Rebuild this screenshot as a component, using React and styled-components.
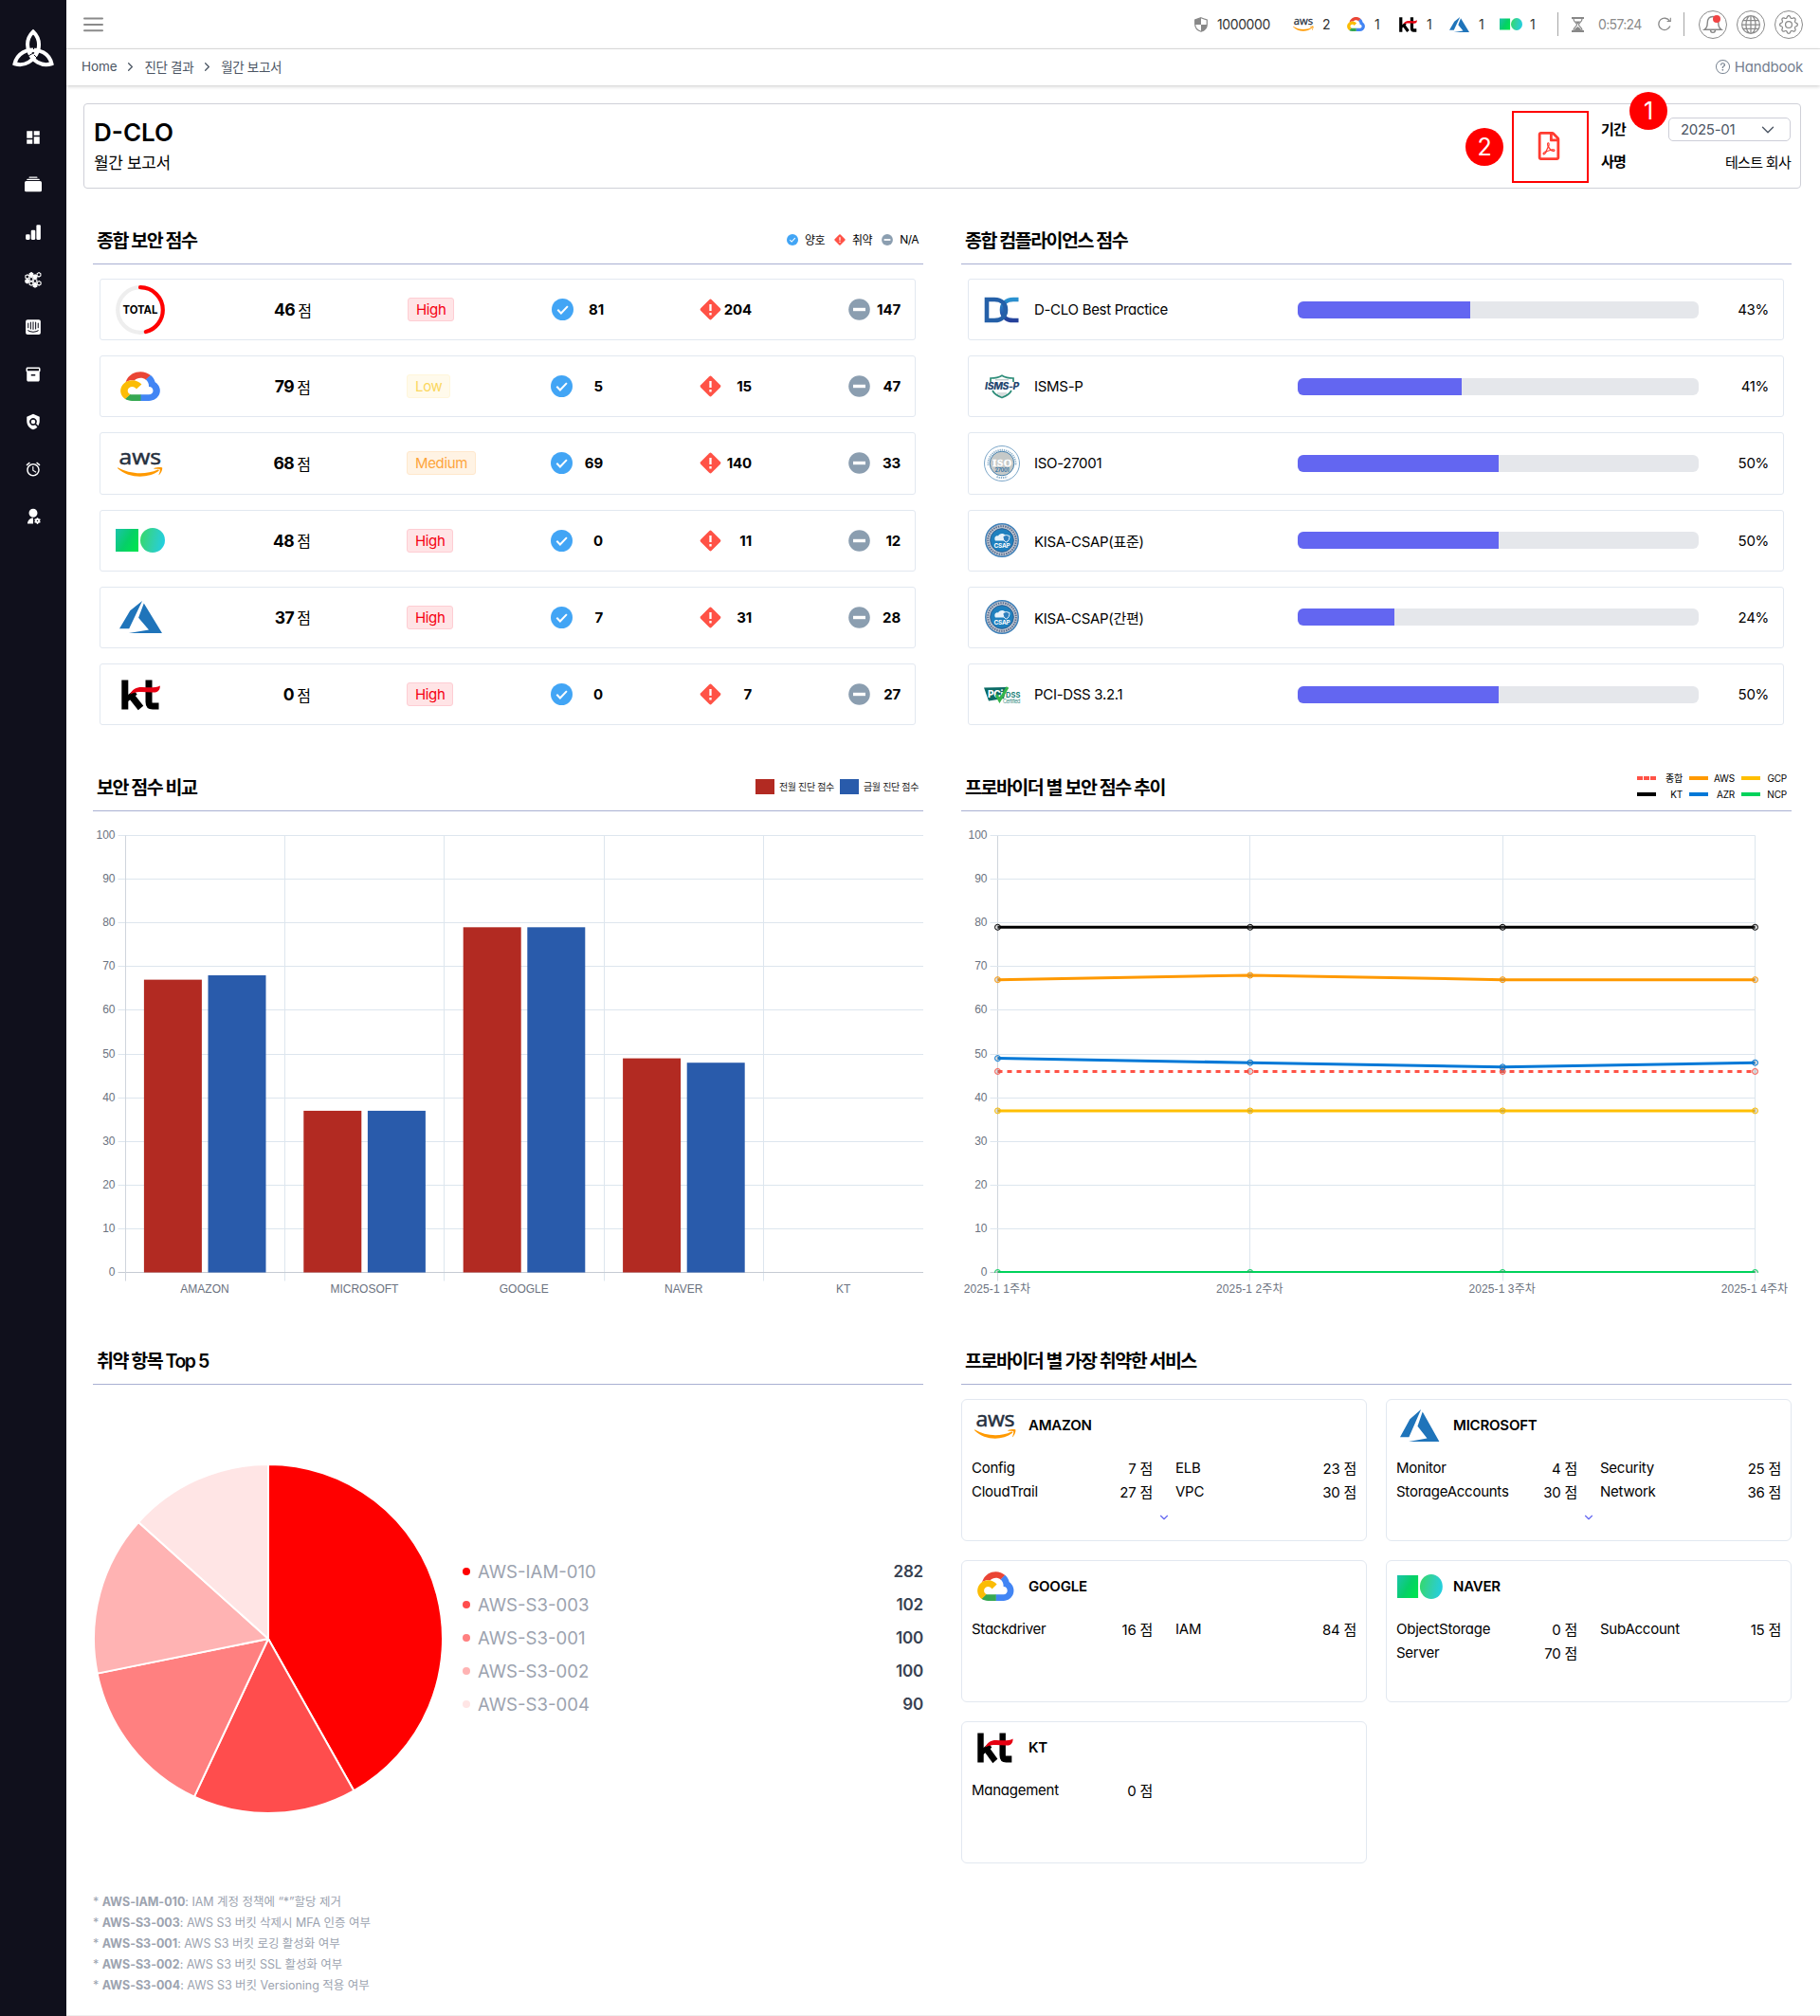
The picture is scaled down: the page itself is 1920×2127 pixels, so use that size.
import React from 'react';
import styled, { createGlobalStyle } from 'styled-components';
import { MdDashboard, MdInventory2, MdPolicy, MdAlarm } from 'react-icons/md';
import { BsCollectionFill, BsBarChartFill, BsGlobe, BsGear, BsQuestionCircle } from 'react-icons/bs';
import { FaIntercom, FaRegFilePdf } from 'react-icons/fa';
import { RiUserSettingsFill } from 'react-icons/ri';
import { ChevronDown, ChevronRight } from 'lucide-react';

const Global = createGlobalStyle`
  * { box-sizing: border-box; }
  body {
    margin: 0;
    background: #fff;
    color: #000;
    font-family: Inter, 'Noto Sans CJK KR', sans-serif;
    font-feature-settings: 'cv11';
    white-space: nowrap;
  }
  svg { display: block; flex: none; overflow: visible; }
`;

const Page = styled.div`
  display: flex;
  height: 2127px;
  overflow: hidden;
`;
const Sidebar = styled.nav`
  width: 70px;
  flex: none;
  background: #10101c;
  color: #fff;
  display: flex;
  flex-direction: column;
  align-items: center;
  padding-top: 30px;
`;
const Brand = styled.div`
  height: 90px;
`;
const NavItem = styled.div`
  height: 50px;
  display: flex;
  align-items: center;
  justify-content: center;
`;
const Main = styled.div`
  flex: 1;
  display: flex;
  flex-direction: column;
  border-bottom: 1px solid #eee;
`;
const TopBar = styled.header`
  height: 52px;
  border-bottom: 1px solid #e4e4e4;
  display: flex;
  align-items: center;
  justify-content: space-between;
  padding: 0 18px;
  color: #8a8a8a;
`;
const TopGroup = styled.div`
  display: flex;
  align-items: center;
`;
const Account = styled.div`
  width: 104px;
  display: flex;
  align-items: center;
  gap: 10px;
  font-size: 14px;
  letter-spacing: -0.4px;
  color: #333;
`;
const ProviderCount = styled.div`
  width: ${(p) => p.$w}px;
  display: flex;
  align-items: center;
  gap: ${(p) => p.$gap || 10}px;
  font-size: 14px;
  color: #333;
`;
const Divider = styled.i`
  width: 1px;
  height: 25px;
  background: #a5a5a5;
  margin-right: ${(p) => p.$after}px;
`;
const Timer = styled.span`
  width: 63px;
  margin-left: 15px;
  font-size: 14px;
  letter-spacing: -0.65px;
`;
const RefreshSlot = styled.span`
  width: 27px;
`;
const RoundButton = styled.div`
  position: relative;
  width: 30px;
  height: 30px;
  border: 1px solid #8a8a8a;
  border-radius: 50%;
  display: flex;
  align-items: center;
  justify-content: center;
  margin-left: ${(p) => p.$gap || 0}px;
`;
const Dot = styled.i`
  position: absolute;
  left: 14px;
  top: 4px;
  width: 8px;
  height: 8px;
  border-radius: 50%;
  background: #f04444;
`;
const CrumbBar = styled.div`
  height: 38px;
  flex: none;
  display: flex;
  align-items: center;
  justify-content: space-between;
  padding: 0 18px 2px 16px;
  box-shadow: 0 1px 4px rgba(0, 0, 0, 0.22);
`;
const Crumbs = styled.div`
  display: flex;
  align-items: center;
  font-size: 13.5px;
  letter-spacing: -0.1px;
  color: #4b5563;
  svg { margin: 0 7px; }
`;
const Korean = styled.span`
  letter-spacing: -0.025em;
`;
const Handbook = styled.div`
  display: flex;
  align-items: center;
  gap: 5px;
  font-size: 15px;
  letter-spacing: -0.2px;
  color: #75808f;
`;
const Content = styled.main`
  padding: 19px 20px 0 18px;
`;
const ReportHead = styled.section`
  position: relative;
  height: 90px;
  border: 1px solid #cfd0d8;
  border-radius: 4px;
  display: flex;
  justify-content: space-between;
  padding: 7px 10px 0 10px;
`;
const ReportTitle = styled.h1`
  margin: 5px 0 0;
  font-size: 26px;
  line-height: 36px;
  font-weight: 600;
  letter-spacing: 0;
`;
const ReportSub = styled.div`
  font-size: 17px;
  line-height: 28px;
  letter-spacing: -0.35px;
`;
const HeadTools = styled.div`
  display: flex;
`;
const PdfBox = styled.div`
  width: 81px;
  height: 76px;
  border: 2px solid #f00;
  color: #ff3b30;
  display: flex;
  align-items: center;
  justify-content: center;
  padding: 0 4px 2px 0;
  margin-right: 13px;
`;
const Fields = styled.div`
  width: 200px;
  padding-top: 7px;
`;
const Field = styled.div`
  height: ${(p) => p.$h}px;
  display: flex;
  align-items: center;
  justify-content: space-between;
  font-size: 15px;
  letter-spacing: -0.7px;
`;
const FieldName = styled.b`
  font-weight: 600;
  margin-top: -2px;
`;
const Select = styled.div`
  width: 129px;
  height: 25px;
  border: 1px solid #cdced8;
  border-radius: 5px;
  display: flex;
  align-items: center;
  justify-content: space-between;
  padding: 0 12px 0 12px;
  font-size: 15px;
  letter-spacing: -0.3px;
  color: #4b5563;
`;
const Marker = styled.div`
  position: absolute;
  left: ${(p) => p.$x}px;
  top: ${(p) => p.$y}px;
  width: 40px;
  height: 40px;
  border-radius: 50%;
  background: #f00;
  color: #fff;
  font-size: 25px;
  display: flex;
  align-items: center;
  justify-content: center;
`;
const Board = styled.div`
  display: grid;
  grid-template-columns: 876px 876px;
  grid-template-rows: 577px 605px auto;
  column-gap: 40px;
  padding: 31px 0 0 10px;
`;
const Section = styled.section`
  min-width: 0;
`;
const SectionHead = styled.div`
  height: 49px;
  border-bottom: 1px solid #a9b0d2;
  display: flex;
  align-items: center;
  justify-content: space-between;
  padding: 0 5px 3px 4px;
`;
const SectionTitle = styled.h2`
  margin: 0;
  font-size: 19.5px;
  font-weight: 600;
  letter-spacing: -1.5px;
`;
const Legend = styled.div`
  display: flex;
  align-items: center;
  gap: 10px;
  font-size: 12px;
  letter-spacing: -0.5px;
`;
const LegendItem = styled.span`
  display: flex;
  align-items: center;
  gap: 7px;
`;
const BarLegend = styled.div`
  display: flex;
  gap: 6px;
  font-size: 10px;
  letter-spacing: -0.35px;
  color: #222;
`;
const BarKey = styled.span`
  display: flex;
  align-items: center;
  gap: 5px;
  &::before {
    content: '';
    width: 20px;
    height: 16px;
    background: ${(p) => p.$color};
  }
`;
const LineLegend = styled.div`
  display: grid;
  grid-template-columns: repeat(3, 48px);
  column-gap: 7px;
  row-gap: 1px;
  font-size: 10px;
  line-height: 16px;
  letter-spacing: -0.2px;
`;
const LineKey = styled.span`
  display: flex;
  align-items: center;
  justify-content: space-between;
`;
const RowList = styled.div`
  padding: 15px 8px 0 7px;
  display: flex;
  flex-direction: column;
  gap: 16px;
`;
const rowBox = `
  height: 65.2px;
  border: 1px solid #e2e8f0;
  border-radius: 3px;
  align-items: center;
`;
const ScoreRow = styled.div`
  ${rowBox}
  display: grid;
  grid-template-columns: ${(p) => (p.$total ? '83px 139px 254px 156px' : '82px 139px 254px 157px')} 157px 55px;
`;
const LogoCell = styled.div`
  display: flex;
  justify-content: center;
  padding-left: ${(p) => p.$nudge || 0}px;
`;
const Score = styled.div`
  display: flex;
  justify-content: flex-end;
  align-items: center;
  gap: 3px;
  font-size: 16px;
  letter-spacing: -0.9px;
  b { font-size: 17.5px; font-weight: 700; letter-spacing: -0.5px; }
`;
const tones = {
  High: ['#f50010', '#ffe4e6', '#fecdd3'],
  Medium: ['#fda53c', '#fff3e4', '#ffe8cc'],
  Low: ['#fbd75e', '#fffaeb', '#fff6da'],
};
const Badge = styled.span`
  display: inline-block;
  margin-left: 102px;
  padding: 0 8px;
  height: 25px;
  line-height: 23px;
  border-radius: 3px;
  font-size: 15px;
  letter-spacing: -0.35px;
  color: ${(p) => tones[p.$level][0]};
  background: ${(p) => tones[p.$level][1]};
  border: 1px solid ${(p) => tones[p.$level][2]};
`;
const Metric = styled.div`
  width: 55px;
  display: flex;
  align-items: center;
  justify-content: space-between;
  font-size: 15px;
  font-weight: 700;
  letter-spacing: -0.15px;
`;
const ComplianceRow = styled.div`
  ${rowBox}
  display: grid;
  grid-template-columns: 69px 278px 423px 74px;
  font-size: 15px;
  letter-spacing: -0.3px;
`;
const Track = styled.div`
  height: 18px;
  border-radius: 6px;
  background: #e5e7eb;
  overflow: hidden;
`;
const Fill = styled.div`
  height: 100%;
  background: #6366f1;
`;
const Percent = styled.div`
  text-align: right;
`;
const PieArea = styled.div`
  display: flex;
  align-items: center;
  height: 536px;
  padding-left: 1px;
`;
const PieLegend = styled.div`
  flex: 1;
  margin-left: 21px;
  padding-bottom: 2px;
`;
const PieKey = styled.div`
  height: 35px;
  display: flex;
  align-items: center;
  font-size: 18.6px;
  letter-spacing: 0;
  color: #9ca3af;
  &::before {
    content: '';
    width: 8px;
    height: 8px;
    margin-right: 8px;
    border-radius: 50%;
    background: ${(p) => p.$color};
  }
  b { margin-left: auto; font-size: 17px; font-weight: 600; letter-spacing: -0.2px; color: #374151; }
`;
const Notes = styled.div`
  margin-top: -1px;
  font-size: 12.5px;
  line-height: 22px;
  letter-spacing: -0.03px;
  color: #9ca3af;
`;
const Cards = styled.div`
  display: grid;
  grid-template-columns: 428px 428px;
  gap: 20px;
  padding-top: 15px;
`;
const Card = styled.div`
  height: 150px;
  border: 1px solid #e2e8f0;
  border-radius: 6px;
  padding: 2px 10px 0;
`;
const CardHead = styled.div`
  display: flex;
  align-items: center;
  height: 48px;
  font-size: 15px;
  font-weight: 600;
  letter-spacing: -0.2px;
`;
const CardLogo = styled.div`
  width: 52px;
  margin-right: 9px;
  margin-left: -1px;
  padding-top: 1px;
  display: flex;
  justify-content: center;
`;
const Services = styled.div`
  display: grid;
  grid-template-columns: 191px 191px;
  column-gap: 24px;
  margin-top: 9px;
`;
const Service = styled.div`
  height: 25px;
  display: flex;
  align-items: center;
  justify-content: space-between;
  font-size: 15px;
  letter-spacing: -0.25px;
`;
const More = styled.div`
  display: flex;
  justify-content: center;
  color: #6366f1;
  margin-top: 8px;
`;

/* ---------- logos ---------- */
const Aws = ({ w, h }) => (
  <svg width={w} height={h} viewBox="0 0 48 28" preserveAspectRatio="none">
    <text x="1.5" y="14.5" fontFamily="'Open Sans', sans-serif" fontWeight="500" fontSize="21" textLength="44.5" lengthAdjust="spacingAndGlyphs" fill="#252f3e" stroke="#252f3e" strokeWidth=".5">aws</text>
    <path d="M.2 18.300C12 25 29 26.500 42.500 20.600C43.800 20.200 44.300 21.300 43.300 22C32 30 12 30 .2 19.200C-.3 18.600 0 18.100 .2 18.300Z" fill="#f90" />
    <path d="M38.500 18.900C41.500 17.700 46 17.700 47 18.300C47.800 19.600 46.300 24 44 26C43.600 26.300 43.300 26.100 43.500 25.700C44.300 23.900 45.300 21.200 44.700 20.300C44 19.500 41 19.700 38.900 19.700C38.300 19.700 38.200 19.100 38.500 18.900Z" fill="#f90" />
  </svg>
);
const Gcp = ({ w, h }) => (
  <svg width={w} height={h} viewBox="5 14 118 94" preserveAspectRatio="none">
    <path fill="#ea4535" d="M80.6 40.3h.4l-.2-.2 14-14v-.3c-11.8-10.4-28.1-14-43.200-9.500C36.500 20.800 24.900 32.800 20.700 48c.2-.1.5-.2.8-.2 5.200-3.400 11.400-5.400 17.900-5.400 2.200 0 4.300.2 6.400.6.1-.1.2-.1.3-.1 9-9.900 24.200-11.100 34.600-2.600h-.1z" />
    <path fill="#4285f4" d="M108.100 47.800c-2.300-8.500-7.100-16.200-13.800-22.100L80 39.900c6 4.900 9.500 12.300 9.300 20v2.500c16.900 0 16.900 25.200 0 25.200H63.900v20h-.1l.1.2h25.400c14.600.1 27.500-9.300 31.800-23.100 4.300-13.800-1-28.800-13-36.900z" />
    <path fill="#36a852" d="M39 107.900h26.300V87.700H39c-1.900 0-3.700-.4-5.400-1.100l-15.200 14.600v.2c6 4.300 13.200 6.600 20.700 6.600z" />
    <path fill="#fbbc05" d="M40.200 41.900c-14.900.1-28.100 9.300-32.900 22.800-4.800 13.600 0 28.500 11.800 37.300l15.600-14.900c-8.600-3.700-10.600-14.500-4-20.800 6.600-6.400 17.800-4.400 21.700 3.800L68 55.200C61.400 46.900 51.100 42 40.200 42.100z" />
  </svg>
);
const Azure = ({ w, h }) => (
  <svg width={w} height={h} viewBox="0 4 26 20.8" preserveAspectRatio="none">
    <path fill="#1f74ba" d="M13.900 4L6.500 10.200 0 21.900h5.900zM14.900 5.600l-3.300 9.200 6.300 7.900-12.200 2.100H26z" />
  </svg>
);
const Naver = ({ w, h, id }) => (
  <svg width={w} height={h} viewBox="0 0 52 26" preserveAspectRatio="none">
    <defs>
      <linearGradient id={`${id}a`} x1="0" y1="0" x2="1" y2=".6">
        <stop offset="0" stopColor="#1cc3ac" />
        <stop offset=".6" stopColor="#06cf68" />
        <stop offset="1" stopColor="#00e152" />
      </linearGradient>
      <linearGradient id={`${id}b`} x1="0" y1=".3" x2="1" y2=".5">
        <stop offset="0" stopColor="#35d86c" />
        <stop offset=".6" stopColor="#2fd0b4" />
        <stop offset="1" stopColor="#22cfe0" />
      </linearGradient>
    </defs>
    <rect x="0" y="1" width="24" height="24" fill={`url(#${id}a)`} />
    <circle cx="39" cy="13" r="13" fill={`url(#${id}b)`} />
  </svg>
);
const Kt = ({ w, h }) => (
  <svg width={w} height={h} viewBox="0 0 41 32" preserveAspectRatio="none">
    <g fill="none" stroke="#000" strokeWidth="7">
      <path d="M3.800 .5V31.500" />
      <path d="M5 21L15 13.500" strokeWidth="5.500" />
      <path d="M9.500 16L20.500 30" />
      <path d="M29 .5V23.500Q29 28 33 28H39.500" />
    </g>
    <path d="M9 15.500C12 10 16 7.800 22 8C29 8.400 36 9 40.800 6.500C41 10 39.500 13.500 34 13.600C26 13.800 18 11.500 9 15.500Z" fill="#e60012" />
  </svg>
);
const logos = {
  AMAZON: [Aws, 48, 28],
  MICROSOFT: [Azure, 45, 34],
  GOOGLE: [Gcp, 42, 31],
  NAVER: [Naver, 52, 26],
  KT: [Kt, 41, 32],
};
const ProviderLogo = ({ name, scale = 1 }) => {
  const [Mark, w, h] = logos[name];
  return <Mark w={w * scale} h={h} id={`nv${scale * 100}`} />;
};
const Total = () => (
  <svg width="52" height="52" viewBox="0 0 52 52">
    <circle cx="26" cy="26" r="23.800" fill="none" stroke="#eee" strokeWidth="4.200" />
    <circle cx="26" cy="26" r="23.800" fill="none" stroke="#f00" strokeWidth="4.200" strokeLinecap="round" pathLength="100" strokeDasharray="46 100" transform="rotate(-90 26 26)" />
    <text x="26" y="29.500" textAnchor="middle" fontSize="11.500" fontWeight="700" textLength="37" lengthAdjust="spacingAndGlyphs" fontFamily="Inter">TOTAL</text>
  </svg>
);
const Triquetra = () => (
  <svg width="46" height="42" viewBox="-1 0 46 42" fill="none" stroke="#fff" strokeWidth="4">
    {[0, 120, 240].map((a) => (
      <path key={a} transform={`rotate(${a} 22 26)`} d="M22 3.500C14 11 14 23 22.500 31C30 23 30 11 22 3.500Z" />
    ))}
    <path d="M22.500 14V22M17 29L22 26M27 32L23 28" stroke="#10101c" strokeWidth="1" />
  </svg>
);
const HexCluster = () => (
  <svg width="18" height="17" viewBox="0 0 18 17" fill="none" stroke="#fff" strokeWidth="1.100">
    {[[2.800, 5, 0], [7, 2.800, 1], [11, 5, 1], [15, 2.800, 0], [2.800, 9.600, 1], [7, 7.500, 0], [11, 9.500, 0], [7, 12, 0], [11, 14, 1], [15.200, 11.800, 0]].map(([x, y, f], i) => (
      <path key={i} fill={f ? '#fff' : 'none'} d={`M${x} ${y - 2.200}l1.900 1.100v2.200l-1.900 1.100l-1.900-1.100v-2.200z`} />
    ))}
  </svg>
);
const CheckIcon = ({ s }) => (
  <svg width={s} height={s} viewBox="0 0 23 23">
    <circle cx="11.500" cy="11.500" r="11.500" fill="#42a5f5" />
    <path d="M6.300 11.800l3.600 3.700 7-7.400" fill="none" stroke="#fff" strokeWidth="2" />
  </svg>
);
const WarnIcon = ({ s }) => (
  <svg width={s} height={s} viewBox="0 0 23 23">
    <rect x="3.300" y="3.300" width="16.400" height="16.400" rx="1.800" transform="rotate(45 11.500 11.500)" fill="#ff5246" />
    <path d="M11.500 6v7M11.500 15v2.400" stroke="#fff" strokeWidth="2.300" />
  </svg>
);
const MinusIcon = ({ s }) => (
  <svg width={s} height={s} viewBox="0 0 23 23">
    <circle cx="11.500" cy="11.500" r="11.300" fill="#8b9eb0" />
    <rect x="5" y="9.800" width="13" height="3.400" fill="#fff" />
  </svg>
);
const ShieldIcon = () => (
  <svg width="14" height="16" viewBox="0 0 14 16">
    <path d="M7 .7L13.300 3V7.500C13.300 11 11 14 7 15.300C3 14 .7 11 .7 7.500V3Z" fill="#fff" stroke="#888" strokeWidth="1.200" />
    <path d="M7 .7V8H.7V3ZM7 8H13.300C13 11.500 11 14 7 15.300Z" fill="#888" />
  </svg>
);
const Hourglass = () => (
  <svg width="13" height="16" viewBox="0 0 13 16" fill="none" stroke="#888" strokeWidth="1.200">
    <path d="M0 1H13M0 15H13" strokeWidth="2" />
    <path d="M2 2C2 5.500 5.500 6 5.500 8C5.500 10 2 10.500 2 14M11 2C11 5.500 7.500 6 7.500 8C7.500 10 11 10.500 11 14" />
    <path d="M3.500 4.500H9.500L6.500 7.500ZM3 14C3 12 5 11.500 6.500 10C8 11.500 10 12 10 14Z" fill="#888" stroke="none" />
  </svg>
);
const Refresh = () => (
  <svg width="14" height="15" viewBox="0 0 14 15" fill="none" stroke="#888" strokeWidth="1.300">
    <path d="M12.800 9.500A6.200 6.200 0 1 1 12.300 4.200" />
    <path d="M13.300 .8V4.500H9.600" strokeWidth="1.100" />
  </svg>
);
const BellIcon = () => (
  <svg width="20" height="20" viewBox="0 0 20 20" fill="none" stroke="#888" strokeWidth="1.400">
    <path d="M1 15.300H19C16.500 13.500 15.800 12 15.800 8.500C15.800 4 13.500 1.500 10 1.500C6.500 1.500 4.200 4 4.200 8.500C4.200 12 3.500 13.500 1 15.300ZM7.500 15.500C7.500 19.300 12.500 19.300 12.500 15.500" />
  </svg>
);
const Burger = () => (
  <svg width="21" height="16" viewBox="0 0 21 16" stroke="#8a8a8a" strokeWidth="2" strokeLinecap="round">
    <path d="M1 1.500H20M1 8H20M1 14.300H20" />
  </svg>
);

/* ---------- compliance marks ---------- */
const DcMark = () => (
  <svg width="37" height="28" viewBox="0 0 37 28" fill="none" strokeWidth="4.600">
    <defs>
      <linearGradient id="dc1" x1="0" y1="0" x2="0" y2="1">
        <stop offset="0" stopColor="#2a92d0" />
        <stop offset="1" stopColor="#25409a" />
      </linearGradient>
    </defs>
    <path d="M36.500 3H31C23 3 19 8 19 14C19 20 23 25 31 25H36.500" stroke="url(#dc1)" />
    <path d="M3 3H11C19 3 23 8 23 14C23 20 19 25 11 25H3Z" stroke="#2560a8" />
  </svg>
);
const IsmsMark = () => (
  <svg width="38" height="26" viewBox="0 0 38 26">
    <path d="M7 8V4C12 4 16 3 19 1.200C22 3 26 4 31 4V8M9 17C11 21 15 23 19 24.500C23 23 27 21 29 17" fill="none" stroke="#2c8c78" strokeWidth="1.700" />
    <path d="M12 5.800H26M14 20H24M16 22H22" stroke="#9aa" strokeWidth=".8" />
    <text x="1" y="16" fontSize="10" fontStyle="italic" fontWeight="800" fontFamily="Inter" textLength="36" lengthAdjust="spacingAndGlyphs" fill="#25466e">ISMS-P</text>
  </svg>
);
const IsoMark = () => (
  <svg width="38" height="38" viewBox="0 0 38 38">
    <circle cx="19" cy="19" r="18.500" fill="#fff" stroke="#6d9cc2" strokeWidth=".9" />
    <path id="isoTop" d="M4.500 21A14.600 14.600 0 1 1 33.500 21" fill="none" stroke="#8db0ca" strokeWidth="1.800" strokeDasharray="1.300 .9" />
    <path d="M13.500 33A15 15 0 0 0 24.500 33" fill="none" stroke="#8db0ca" strokeWidth="2" strokeDasharray="1.300 .9" />
    <circle cx="19" cy="19" r="12.800" fill="#c5c9c8" stroke="#4b84b0" strokeWidth="1" />
    <text x="19" y="21.500" textAnchor="middle" fontSize="11" fontWeight="700" fontFamily="'Liberation Serif'" fill="#fff" stroke="#fff" strokeWidth=".4" textLength="20">ISO</text>
    <text x="19" y="28" textAnchor="middle" fontSize="5.500" fontWeight="700" fontFamily="Inter" fill="#3d78a6">27001</text>
  </svg>
);
const CsapMark = () => (
  <svg width="36" height="36" viewBox="0 0 36 36">
    <circle cx="18" cy="18" r="17.200" fill="#c3c8d0" stroke="#3d7fb8" strokeWidth="1.500" />
    <circle cx="18" cy="18" r="14.800" fill="none" stroke="#5b6f92" strokeWidth="2" strokeDasharray="1.500 1" />
    <circle cx="18" cy="18" r="12.300" fill="#1f80be" stroke="#2a5f95" />
    <path d="M11 18.500C9 15 12 12.500 14 13.500C15 10.500 20 10 21.500 13L20 18.500Z" fill="#e6f2fa" />
    <path d="M19 13.500L22.500 12.500L26 13.500C26 17 25 19 22.500 20C20 19 19 17 19 13.500Z" fill="#2f7fbd" stroke="#fff" strokeWidth=".9" />
    <text x="18" y="26" textAnchor="middle" fontSize="6.500" fontWeight="700" fontFamily="Inter" fill="#fff">CSAP</text>
  </svg>
);
const PciMark = () => (
  <svg width="38" height="18" viewBox="0 0 38 18">
    <path d="M0 1.500L24 1L21 13L5 15.500Z" fill="#0b6b66" />
    <text x="4" y="12" fontSize="10" fontWeight="800" fontFamily="Inter" fill="#fff" textLength="16" lengthAdjust="spacingAndGlyphs">PCi</text>
    <path d="M13 9L16.500 15L25 1" fill="none" stroke="#33b54a" strokeWidth="3" />
    <text x="23" y="12" fontSize="7.500" fontWeight="700" fontFamily="Inter" fill="#1d8078" textLength="15">DSS</text>
    <text x="20" y="17.500" fontSize="5.500" fontFamily="Inter" fill="#3d9088" textLength="18">Certified</text>
  </svg>
);

/* ---------- data ---------- */
const scores = [
  ['TOTAL', 46, 'High', 81, 204, 147],
  ['GOOGLE', 79, 'Low', 5, 15, 47],
  ['AMAZON', 68, 'Medium', 69, 140, 33],
  ['NAVER', 48, 'High', 0, 11, 12],
  ['MICROSOFT', 37, 'High', 7, 31, 28],
  ['KT', 0, 'High', 0, 7, 27],
];
const compliance = [
  [<DcMark />, 'D-CLO Best Practice', 43],
  [<IsmsMark />, 'ISMS-P', 41],
  [<IsoMark />, 'ISO-27001', 50],
  [<CsapMark />, 'KISA-CSAP(표준)', 50],
  [<CsapMark />, 'KISA-CSAP(간편)', 24],
  [<PciMark />, 'PCI-DSS 3.2.1', 50],
];
const bars = [
  ['AMAZON', 67, 68],
  ['MICROSOFT', 37, 37],
  ['GOOGLE', 79, 79],
  ['NAVER', 49, 48],
  ['KT', 0, 0],
];
const series = [
  ['#00d25b', [0, 0, 0, 0]],
  ['#ffbf00', [37, 37, 37, 37]],
  ['#ff5246', [46, 46, 46, 46], '5 5'],
  ['#0078d7', [49, 48, 47, 48]],
  ['#ff9900', [67, 68, 67, 67]],
  ['#000000', [79, 79, 79, 79]],
];
const vulnerable = [
  ['AWS-IAM-010', 282, '#ff0000', 'IAM 계정 정책에 “*”할당 제거'],
  ['AWS-S3-003', 102, '#ff4d4d', 'AWS S3 버킷 삭제시 MFA 인증 여부'],
  ['AWS-S3-001', 100, '#ff8080', 'AWS S3 버킷 로깅 활성화 여부'],
  ['AWS-S3-002', 100, '#ffb3b3', 'AWS S3 버킷 SSL 활성화 여부'],
  ['AWS-S3-004', 90, '#ffe5e5', 'AWS S3 버킷 Versioning 적용 여부'],
];
const services = [
  ['AMAZON', [['Config', 7], ['ELB', 23], ['CloudTrail', 27], ['VPC', 30]], true],
  ['MICROSOFT', [['Monitor', 4], ['Security', 25], ['StorageAccounts', 30], ['Network', 36]], true],
  ['GOOGLE', [['Stackdriver', 16], ['IAM', 84]]],
  ['NAVER', [['ObjectStorage', 0], ['SubAccount', 15], ['Server', 70]]],
  ['KT', [['Management', 0]]],
];

/* ---------- charts ---------- */
const GRID = '#dde6ee';
const AXIS_FONT = "'Liberation Sans', 'Noto Sans CJK KR', sans-serif";
const TOP = 25.5;
const STEP = 46.1;
const yOf = (v) => TOP + (100 - v) * (STEP / 10);

const YAxis = ({ x, x2 }) =>
  Array.from({ length: 11 }, (_, i) => {
    const y = Math.floor(TOP + i * STEP) + 0.5;
    return (
      <g key={i}>
        <line x1={x - 8} x2={x2} y1={y} y2={y} stroke={i === 10 ? '#c6cbd3' : GRID} />
        <text x={x - 11} y={y + 3.500} textAnchor="end">{100 - i * 10}</text>
      </g>
    );
  });

const BarChart = () => (
  <svg width="876" height="520" fontFamily={AXIS_FONT} fontSize="12" fill="#6b7280">
    {[1, 2, 3, 4].map((i) => {
      const x = Math.floor(34 + i * 168.400) + 0.5;
      return <line key={i} x1={x} x2={x} y1={TOP} y2={TOP + 470} stroke={GRID} />;
    })}
    <YAxis x={34.500} x2={876} />
    <line x1="34.500" x2="34.500" y1={TOP} y2={TOP + 470} stroke="#cfd5dc" />
    {bars.map(([name, prev, now], i) => {
      const x = 34.500 + i * 168.400;
      return (
        <g key={name}>
          <rect x={x + 19.400} width="61" y={yOf(prev)} height={yOf(0) - yOf(prev)} fill="#b22a22" />
          <rect x={x + 87} width="61" y={yOf(now)} height={yOf(0) - yOf(now)} fill="#295bab" />
          <text x={x + 83.500} y="508" textAnchor="middle">{name}</text>
        </g>
      );
    })}
  </svg>
);

const LineChart = () => {
  const xs = [38.500, 304.800, 571.200, 837.500];
  return (
    <svg width="876" height="520" fontFamily={AXIS_FONT} fontSize="12" fill="#6b7280">
      <defs>
        <clipPath id="plot"><rect x="30" y="20" width="812" height="467" /></clipPath>
      </defs>
      {xs.map((x, i) => {
        const gx = Math.floor(x) + 0.5;
        return (
          <g key={x}>
            <line x1={gx} x2={gx} y1={TOP} y2={TOP + 470} stroke={i ? GRID : '#cfd5dc'} />
            <text x={x - 0.500} y="508" textAnchor="middle" letterSpacing=".1">{`2025-1 ${i + 1}주차`}</text>
          </g>
        );
      })}
      <YAxis x={38.500} x2={837.500} />
      <g clipPath="url(#plot)">
        {series.map(([color, values, dash]) => (
          <g key={color}>
            <polyline points={values.map((v, i) => `${xs[i]},${yOf(v)}`).join(' ')} fill="none" stroke={color} strokeWidth="3" strokeDasharray={dash} />
            {values.map((v, i) => (
              <circle key={i} cx={xs[i]} cy={yOf(v)} r="3" fill="rgba(120,120,120,.25)" stroke={color} />
            ))}
          </g>
        ))}
      </g>
    </svg>
  );
};

const Pie = () => {
  const total = vulnerable.reduce((s, v) => s + v[1], 0);
  const c = 184;
  const r = 184;
  let from = 0;
  return (
    <svg width="368" height="368" viewBox="0 0 368 368">
      {vulnerable.map(([name, value, color]) => {
        const a0 = (from / total) * 2 * Math.PI;
        from += value;
        const a1 = (from / total) * 2 * Math.PI;
        const p = (a) => `${c + r * Math.sin(a)} ${c - r * Math.cos(a)}`;
        return <path key={name} d={`M${c} ${c}L${p(a0)}A${r} ${r} 0 0 1 ${p(a1)}Z`} fill={color} stroke="#fff" strokeWidth="2" strokeLinejoin="round" />;
      })}
    </svg>
  );
};

const lineKeys = [
  ['종합', '#ff5246', true], ['AWS', '#ff9900'], ['GCP', '#ffbf00'],
  ['KT', '#000'], ['AZR', '#0078d7'], ['NCP', '#00d25b'],
];

const navIcons = [
  <MdDashboard size={18} />, <BsCollectionFill size={18} />, <BsBarChartFill size={18} />, <HexCluster />,
  <FaIntercom size={18} />, <MdInventory2 size={18} />, <MdPolicy size={18} />, <MdAlarm size={18} />, <RiUserSettingsFill size={18} />,
];

export default function App() {
  return (
    <Page>
      <Global />
      <Sidebar>
        <Brand><Triquetra /></Brand>
        {navIcons.map((icon, i) => <NavItem key={i}>{icon}</NavItem>)}
      </Sidebar>
      <Main>
        <TopBar>
          <Burger />
          <TopGroup>
            <Account><ShieldIcon />1000000</Account>
            <ProviderCount $w={57} $gap={9}><Aws w={22} h={15} />2</ProviderCount>
            <ProviderCount $w={55}><Gcp w={19} h={15} />1</ProviderCount>
            <ProviderCount $w={53}><Kt w={19} h={16} />1</ProviderCount>
            <ProviderCount $w={53}><Azure w={21} h={16} />1</ProviderCount>
            <ProviderCount $w={61} $gap={8}><Naver w={24} h={13} id="top" />1</ProviderCount>
            <Divider $after={14} />
            <Hourglass />
            <Timer>0:57:24</Timer>
            <RefreshSlot><Refresh /></RefreshSlot>
            <Divider $after={15} />
            <RoundButton><BellIcon /><Dot /></RoundButton>
            <RoundButton $gap={10}><BsGlobe size={20} /></RoundButton>
            <RoundButton $gap={10}><BsGear size={20} /></RoundButton>
          </TopGroup>
        </TopBar>
        <CrumbBar>
          <Crumbs>
            Home<ChevronRight size={15} /><Korean>진단 결과</Korean><ChevronRight size={15} /><Korean>월간 보고서</Korean>
          </Crumbs>
          <Handbook><BsQuestionCircle size={15} />Handbook</Handbook>
        </CrumbBar>
        <Content>
          <ReportHead>
            <div>
              <ReportTitle>D-CLO</ReportTitle>
              <ReportSub>월간 보고서</ReportSub>
            </div>
            <HeadTools>
              <PdfBox><FaRegFilePdf size={30} /></PdfBox>
              <Fields>
                <Field $h={25}>
                  <FieldName>기간</FieldName>
                  <Select>2025-01<ChevronDown size={22} strokeWidth={1.500} /></Select>
                </Field>
                <Field $h={42}>
                  <FieldName>사명</FieldName>
                  <span>테스트 회사</span>
                </Field>
              </Fields>
            </HeadTools>
            <Marker $x={1630} $y={-13}>1</Marker>
            <Marker $x={1457} $y={25}>2</Marker>
          </ReportHead>
          <Board>
            <Section>
              <SectionHead>
                <SectionTitle>종합 보안 점수</SectionTitle>
                <Legend>
                  <LegendItem><CheckIcon s={12} />양호</LegendItem>
                  <LegendItem><WarnIcon s={12} />취약</LegendItem>
                  <LegendItem><MinusIcon s={12} />N/A</LegendItem>
                </Legend>
              </SectionHead>
              <RowList>
                {scores.map(([name, score, level, ok, bad, na]) => (
                  <ScoreRow key={name} $total={name === 'TOTAL'}>
                    <LogoCell $nudge={name === 'TOTAL' ? 0 : 2}>
                      {name === 'TOTAL' ? <Total /> : <ProviderLogo name={name} />}
                    </LogoCell>
                    <Score><b>{score}</b>점</Score>
                    <div><Badge $level={level}>{level}</Badge></div>
                    <Metric><CheckIcon s={23} />{ok}</Metric>
                    <Metric><WarnIcon s={23} />{bad}</Metric>
                    <Metric><MinusIcon s={23} />{na}</Metric>
                  </ScoreRow>
                ))}
              </RowList>
            </Section>
            <Section>
              <SectionHead><SectionTitle>종합 컴플라이언스 점수</SectionTitle></SectionHead>
              <RowList>
                {compliance.map(([mark, name, pct]) => (
                  <ComplianceRow key={name}>
                    <LogoCell>{mark}</LogoCell>
                    <span>{name}</span>
                    <Track><Fill style={{ width: `${pct}%` }} /></Track>
                    <Percent>{pct}%</Percent>
                  </ComplianceRow>
                ))}
              </RowList>
            </Section>
            <Section>
              <SectionHead>
                <SectionTitle>보안 점수 비교</SectionTitle>
                <BarLegend>
                  <BarKey $color="#b22a22">전월 진단 점수</BarKey>
                  <BarKey $color="#295bab">금월 진단 점수</BarKey>
                </BarLegend>
              </SectionHead>
              <BarChart />
            </Section>
            <Section>
              <SectionHead>
                <SectionTitle>프로바이더 별 보안 점수 추이</SectionTitle>
                <LineLegend>
                  {lineKeys.map(([name, color, dashed]) => (
                    <LineKey key={name}>
                      <svg width="20" height="4"><path d="M0 2H20" stroke={color} strokeWidth="4" strokeDasharray={dashed ? '6 1' : undefined} /></svg>
                      {name}
                    </LineKey>
                  ))}
                </LineLegend>
              </SectionHead>
              <LineChart />
            </Section>
            <Section>
              <SectionHead><SectionTitle>취약 항목 Top 5</SectionTitle></SectionHead>
              <PieArea>
                <Pie />
                <PieLegend>
                  {vulnerable.map(([name, value, color]) => (
                    <PieKey key={name} $color={color}>{name}<b>{value}</b></PieKey>
                  ))}
                </PieLegend>
              </PieArea>
              <Notes>
                {vulnerable.map(([name, , , text]) => (
                  <div key={name}>* <b>{name}</b>: {text}</div>
                ))}
              </Notes>
            </Section>
            <Section>
              <SectionHead><SectionTitle>프로바이더 별 가장 취약한 서비스</SectionTitle></SectionHead>
              <Cards>
                {services.map(([name, list, more]) => (
                  <Card key={name}>
                    <CardHead><CardLogo><ProviderLogo name={name} scale={0.92} /></CardLogo>{name}</CardHead>
                    <Services>
                      {list.map(([label, value]) => (
                        <Service key={label}><span>{label}</span><span>{value} 점</span></Service>
                      ))}
                    </Services>
                    {more && <More><ChevronDown size={14} /></More>}
                  </Card>
                ))}
              </Cards>
            </Section>
          </Board>
        </Content>
      </Main>
    </Page>
  );
}
